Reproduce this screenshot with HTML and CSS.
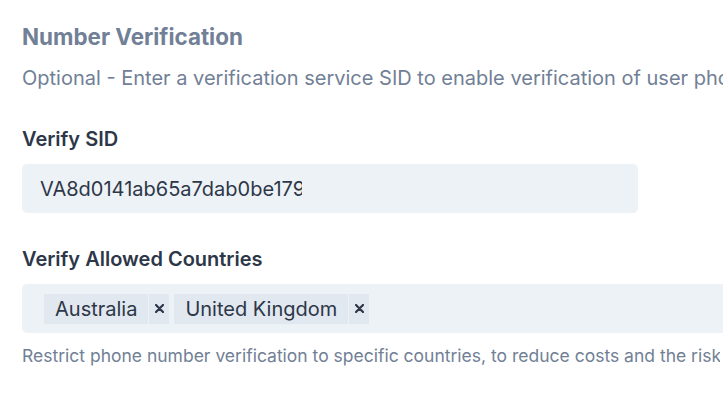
FILE: index.html
```html
<!DOCTYPE html>
<html lang="en">

<head>
    <link rel="stylesheet" href="styles.css">
</head>

<body>
    <div class="section">
        <h3 class="title">Number Verification</h3>
        <p class="subtitle">Optional - Enter a verification service SID to enable verification of user phone numbers</p>

        <div class="field">
            <label class="label" for="sid">Verify SID</label>
            <div class="input">
                <span class="value">VA8d0141ab65a7dab0be179e2d8d3a4b12</span>
            </div>
        </div>

        <div class="field">
            <label class="label">Verify Allowed Countries</label>
            <div class="multi">
                <div class="tag">
                    <span class="tag-label">Australia</span>
                    <span class="tag-remove">
                        <svg width="9" height="9" viewBox="0 0 9 9"><path d="M1 1L8 8M8 1L1 8" stroke="#2d3748" stroke-width="2.2" stroke-linecap="round"/></svg>
                    </span>
                </div>
                <div class="tag">
                    <span class="tag-label">United Kingdom</span>
                    <span class="tag-remove">
                        <svg width="9" height="9" viewBox="0 0 9 9"><path d="M1 1L8 8M8 1L1 8" stroke="#2d3748" stroke-width="2.2" stroke-linecap="round"/></svg>
                    </span>
                </div>
            </div>
            <p class="help">Restrict phone number verification to specific countries, to reduce costs and the risk of abuse</p>
        </div>
    </div>
</body>

</html>
```

FILE: styles.css
```css
body {
    font-family: Inter, "Noto Sans", sans-serif;
    background-color: #FFFFFF;
    margin: 0;
    padding: 0;
    overflow: hidden;
}

.section {
    padding: 23px 0 0 22px;
    white-space: nowrap;
}

.title {
    margin: 0;
    font-size: 22.4px;
    line-height: 28px;
    font-weight: 700;
    color: #718096;
}

.subtitle {
    margin: 14px 0 0;
    font-size: 20px;
    line-height: 26px;
    color: #718096;
}

.field {
    margin-top: 35px;
}

.field + .field {
    margin-top: 33px;
}

.label {
    display: block;
    font-size: 20px;
    line-height: 26px;
    font-weight: 600;
    color: #2d3748;
}

.input {
    margin-top: 12px;
    width: 616px;
    height: 49px;
    display: flex;
    align-items: center;
    padding-left: 18px;
    box-sizing: border-box;
    background-color: #EDF2F7;
    border-radius: 5px;
}

.value {
    display: block;
    width: 262px;
    overflow: hidden;
    font-size: 20px;
    color: #2d3748;
}

.multi {
    margin-top: 12px;
    width: 760px;
    height: 49px;
    display: flex;
    align-items: center;
    gap: 5px;
    padding-left: 22px;
    box-sizing: border-box;
    background-color: #EDF2F7;
    border-radius: 5px;
}

.tag {
    display: flex;
    height: 30px;
    gap: 1px;
}

.tag-label,
.tag-remove {
    display: flex;
    align-items: center;
    background-color: #E2E8F0;
    color: #2d3748;
}

.tag-label {
    padding: 0 11px;
    font-size: 20px;
}

.tag-remove {
    width: 20px;
    justify-content: center;
}

.help {
    margin: 12px 0 0;
    width: 698px;
    overflow: hidden;
    font-size: 17.5px;
    line-height: 22px;
    color: #718096;
}
```
